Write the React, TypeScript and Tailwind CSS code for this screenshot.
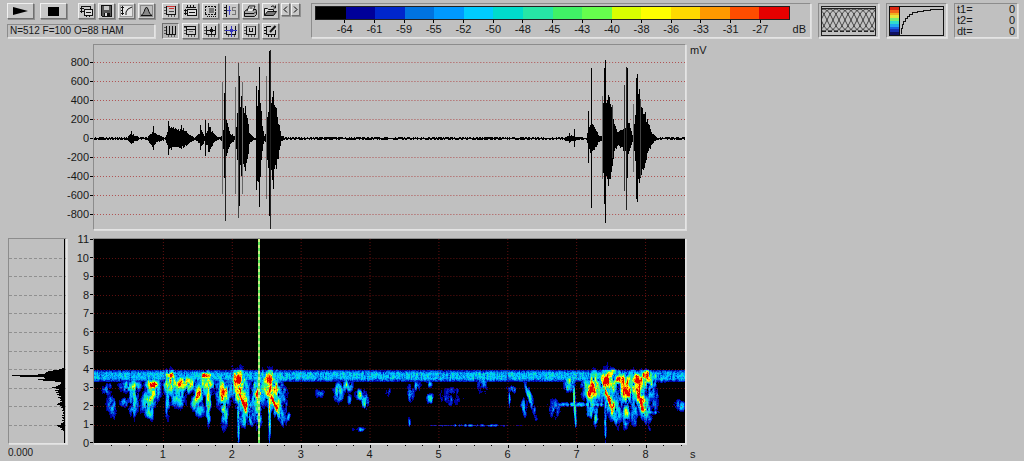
import React, { ReactNode } from 'react';

// Deterministic noise so every render draws the same recording
function createRandom(seed: number) {
    let s = seed;
    return () => {
        s = (s * 1664525 + 1013904223) % 4294967296;
        return s / 4294967296;
    };
}

const PALETTE = [
    '#000000', '#000099', '#0026cc', '#0073e0', '#0099ff', '#00ccff', '#00dccc', '#26e6a6',
    '#40f266', '#66ff4d', '#d9ff00', '#ffff00', '#ffd900', '#ff9900', '#ff4d00', '#e60000',
];

const LEVELS = [-64, -61, -59, -55, -52, -50, -48, -45, -43, -40, -38, -36, -33, -31, -27];

const PLOT_W = 592;
const SPEC_H = 204;
const SECOND = 69;

/* ---------- Waveform ---------- */

// [x, amplitude] envelope points, in plot pixels
const ENVELOPE: [number, number][] = [
    [0, 1], [33, 1], [37, 5], [41, 2], [47, 1], [53, 1], [58, 7], [63, 3], [71, 1], [75, 12], [82, 9], [90, 9], [96, 3],
    [101, 1], [108, 8], [110, 2], [115, 12], [119, 5], [123, 1], [128, 2], [130, 18], [133, 16], [136, 5], [141, 1], [143, 24],
    [147, 32], [151, 30], [153, 24], [155, 5], [159, 1], [161, 1], [162, 38], [166, 40], [168, 12], [170, 2],
    [172, 6], [174, 34], [178, 42], [181, 34], [184, 18], [187, 2], [192, 1], [470, 1], [478, 3], [484, 1], [493, 1],
    [496, 13], [501, 13], [505, 3], [508, 2], [510, 34], [513, 46], [517, 42], [521, 14], [524, 7], [530, 11],
    [535, 18], [539, 3], [541, 14], [544, 58], [548, 38], [553, 21], [558, 6], [563, 1], [592, 1],
];

// [x, up, down, stroke]
const SPIKES: [number, number, number, string][] = [
    [37, 7, 6, '#000'], [59, 12, 12, '#000'], [74, 17, 17, '#000'], [87, 13, 11, '#000'],
    [106, 13, 12, '#000'], [111, 18, 18, '#000'], [114, 15, 14, '#000'],
    [128, 56, 56, '#666'], [130, 45, 40, '#000'], [131, 82, 83, '#222'],
    [141, 51, 56, '#666'], [144, 75, 80, '#444'], [145, 62, 68, '#000'], [147, 42, 38, '#000'], [148, 56, 56, '#666'],
    [162, 52, 52, '#000'], [164, 48, 44, '#000'], [165, 71, 69, '#000'],
    [172, 62, 61, '#666'], [175, 87, 78, '#000'], [176, 88, 91, '#222'], [179, 47, 51, '#000'],
    [476, 5, 5, '#000'], [481, 9, 9, '#000'], [495, 27, 25, '#000'], [498, 70, 70, '#000'],
    [509, 42, 41, '#666'], [511, 70, 66, '#000'], [512, 78, 85, '#000'], [515, 43, 48, '#000'], [519, 33, 20, '#444'],
    [531, 53, 53, '#333'], [533, 71, 72, '#222'], [534, 70, 40, '#000'], [540, 34, 34, '#666'],
    [543, 60, 61, '#000'], [544, 64, 64, '#000'], [547, 39, 39, '#444'],
];

const WAVE_LABELS = [800, 600, 400, 200, 0, -200, -400, -600, -800];
const ZERO = 93;

function buildWave() {
    const rnd = createRandom(7);
    let d = '';
    let i = 0;
    for (let x = 0; x < PLOT_W; x++) {
        while (i < ENVELOPE.length - 2 && x > ENVELOPE[i + 1][0]) i++;
        const [x0, a0] = ENVELOPE[i];
        const [x1, a1] = ENVELOPE[i + 1];
        const amp = a0 + ((a1 - a0) * (x - x0)) / (x1 - x0);
        const quiet = amp < 1.5;
        const up = quiet ? (rnd() > 0.4 ? 1 : 0) : Math.round(amp * (0.75 + rnd() * 0.35));
        const down = quiet ? (rnd() > 0.4 ? 1 : 0) : Math.round(amp * (0.75 + rnd() * 0.35));
        d += `M${x} ${ZERO - up}h1v${up + down + 1}h-1z`;
    }
    return d;
}

const WAVE_PATH = buildWave();

const Waveform: React.FC = () => (
    <svg className="block h-full w-full" viewBox="0 0 592 184" preserveAspectRatio="none" shapeRendering="crispEdges">
        {WAVE_LABELS.filter(v => v !== 0).map(v => (
            <line key={v} x1="0" x2="592" y1={ZERO - Math.round(v * 0.095) + 0.5} y2={ZERO - Math.round(v * 0.095) + 0.5} stroke="#b05050" strokeDasharray="1 2" />
        ))}
        <path d={WAVE_PATH} fill="#000" />
        {SPIKES.map(([x, up, down, color]) => (
            <rect key={x} x={x} y={ZERO - up} width="1" height={up + down} fill={color} />
        ))}
    </svg>
);

/* ---------- Spectrogram ---------- */

// [x, y, rx, ry, level, slant]
type Blob = [number, number, number, number, number, number];

const BLOBS: Blob[] = [
    [13, 150, 5, 5, 0.3, 0], [17, 166, 4, 10, 0.3, 0.1], [36, 147, 8, 5, 0.5, 0], [39, 162, 4, 14, 0.38, 0], [31, 163, 5, 4, 0.28, 0],
    [58, 145, 5, 5, 0.82, 0], [57, 156, 6, 12, 0.58, -0.3], [55, 173, 4, 7, 0.36, 0],
    [76, 136, 4, 3, 1.1, 0], [76, 143, 5, 11, 0.64, 0], [89, 143, 10, 7, 0.76, 0], [84, 157, 6, 9, 0.46, 0], [73, 160, 2, 16, 0.36, 0],
    [112, 136, 4, 3, 1.1, 0], [113, 144, 6, 9, 0.6, 0], [104, 155, 4, 12, 0.6, -0.3], [114, 164, 2, 16, 0.6, 0], [105, 170, 5, 7, 0.3, 0],
    [129, 153, 3, 6, 1.1, 0], [129, 153, 5, 12, 0.7, 0], [130, 170, 3, 14, 0.5, 0],
    [144, 140, 4, 8, 1.2, 0], [145, 147, 7, 15, 0.72, 0.1], [148, 162, 2, 14, 1.1, 0.4], [149, 162, 6, 14, 0.68, 0.4], [144, 174, 1, 20, 0.62, 0], [149, 180, 4, 8, 0.34, 0],
    [164, 154, 3, 7, 1.1, 0], [164, 154, 5, 12, 0.7, 0], [164, 171, 3, 14, 0.48, 0],
    [175, 140, 4, 7, 1.2, 0], [176, 147, 8, 14, 0.72, 0.1], [179, 162, 2, 14, 1.1, 0.4], [180, 162, 6, 13, 0.68, 0.4], [175, 174, 1, 20, 0.62, 0],
    [189, 158, 5, 10, 0.26, 0], [194, 177, 2, 4, 0.26, 0],
    [244, 152, 4, 8, 0.4, 0], [253, 146, 4, 5, 0.42, 0], [255, 160, 2, 4, 0.3, 0], [266, 155, 4, 4, 0.48, 0], [271, 162, 3, 7, 0.42, 0],
    [265, 190, 6, 2, 0.24, 0], [316, 182, 1, 4, 0.36, 0], [317, 154, 3, 7, 0.32, 0], [337, 159, 3, 4, 0.38, 0], [358, 157, 10, 8, 0.22, 0],
    [324, 146, 3, 5, 0.28, 0], [336, 144, 3, 5, 0.26, 0], [294, 153, 3, 4, 0.24, 0], [389, 145, 5, 8, 0.26, 0], [225, 154, 6, 4, 0.2, 0],
    [418, 150, 4, 3, 0.36, 0], [416, 158, 1, 10, 0.3, 0], [434, 150, 2, 7, 0.45, 0.2], [438, 163, 2, 12, 0.42, 0.25], [431, 168, 3, 8, 0.28, 0],
    [476, 144, 4, 6, 0.64, 0], [481, 160, 1, 20, 0.6, 0.05], [461, 169, 5, 9, 0.24, 0],
    [498, 151, 4, 7, 1.15, 0], [499, 148, 7, 13, 0.68, 0], [497, 170, 3, 9, 0.42, 0], [502, 176, 2, 8, 0.42, 0],
    [512, 141, 4, 6, 1.15, 0], [514, 146, 7, 14, 0.68, 0], [516, 162, 2, 15, 1.1, 0.3], [517, 161, 6, 15, 0.65, 0.3], [512, 176, 1, 18, 0.52, 0],
    [526, 140, 11, 6, 0.76, 0], [518, 135, 4, 5, 0.85, 0],
    [533, 152, 4, 6, 1.1, 0], [532, 149, 6, 13, 0.68, 0], [533, 170, 3, 14, 0.5, 0],
    [544, 141, 5, 5, 1.15, 0], [544, 146, 8, 12, 0.68, 0], [547, 162, 2, 15, 1.1, 0.3], [548, 161, 5, 14, 0.65, 0.3], [541, 172, 3, 10, 0.4, 0],
    [553, 136, 4, 4, 1.02, 0], [554, 142, 6, 8, 0.58, 0], [563, 138, 8, 4, 0.5, 0], [558, 158, 6, 15, 0.26, 0],
    [492, 165, 26, 2, 0.34, 0], [374, 186, 34, 1, 0.25, 0], [587, 166, 5, 5, 0.3, 0], [556, 173, 8, 2, 0.34, 0], [400, 186, 20, 1, 0.24, 0],
];

function buildSpectrogram() {
    const rnd = createRandom(41);
    const top = 120;
    const rows = SPEC_H - top;
    const field = new Float32Array(PLOT_W * rows);

    for (const [bx, by, rx, ry, level, slant] of BLOBS) {
        const yMin = Math.max(top, by - ry * 2);
        const yMax = Math.min(SPEC_H - 1, by + ry * 2);
        for (let y = yMin; y <= yMax; y++) {
            const dy = (y - by) / ry;
            const cx = bx + (y - by) * slant;
            for (let x = Math.max(0, Math.floor(cx - rx * 2)); x <= Math.min(PLOT_W - 1, cx + rx * 2); x++) {
                const dx = (x - cx) / rx;
                const v = level * Math.exp(-(dx * dx + dy * dy) * 0.65);
                const k = (y - top) * PLOT_W + x;
                if (v > field[k]) field[k] = v;
            }
        }
    }

    // coarse noise, 2 columns by 5 rows a cell, blended between cells
    const cols = Math.ceil(PLOT_W / 2) + 2;
    const lattice = Array.from({ length: cols * 20 }, () => rnd());
    const coarse = (x: number, r: number) => {
        const gx = x / 2;
        const gy = r / 5;
        const ix = Math.floor(gx);
        const iy = Math.floor(gy);
        const fx = gx - ix;
        const fy = gy - iy;
        const a = lattice[iy * cols + ix] * (1 - fx) + lattice[iy * cols + ix + 1] * fx;
        const b = lattice[(iy + 1) * cols + ix] * (1 - fx) + lattice[(iy + 1) * cols + ix + 1] * fx;
        return a * (1 - fy) + b * fy;
    };

    const paths: string[] = PALETTE.map(() => '');
    let above = new Float32Array(PLOT_W).fill(0.5);
    for (let r = 0; r < rows; r++) {
        const y = r + top;
        const row = new Float32Array(PLOT_W);
        let runStart = 0;
        let runColor = 0;
        for (let x = 0; x < PLOT_W; x++) {
            row[x] = above[x] * 0.45 + rnd() * 0.55;
            const c = coarse(x, r);
            let v = field[r * PLOT_W + x];
            // weak energy breaks up into vertical streaks, strong cores stay solid
            if (v > 0.8) v *= 0.65 + row[x] * 0.3 + c * 0.35;
            else v = v * (row[x] * 0.7 + c * 1.45) - 0.05;
            if (y < 131) v *= 0.4;
            // steady tone just under 4 kHz
            if (y >= 131 && y <= 142) {
                const edge = Math.min(1, (Math.min(y - 130, 143 - y) + 1) / 5);
                v = Math.max(v, edge * (0.08 + row[x] * 0.32 + c * 0.14));
            }
            const color = v < 0.07 ? 0 : Math.min(15, Math.max(1, Math.floor(v * 16)));
            if (color !== runColor) {
                if (runColor > 0) paths[runColor] += `M${runStart} ${y}h${x - runStart}v1h${runStart - x}z`;
                runStart = x;
                runColor = color;
            }
        }
        if (runColor > 0) paths[runColor] += `M${runStart} ${y}h${PLOT_W - runStart}v1h${runStart - PLOT_W}z`;
        above = row;
    }
    return paths;
}

const SPEC_PATHS = buildSpectrogram();

const Spectrogram: React.FC = () => (
    <svg className="block h-full w-full bg-black" viewBox="0 0 592 204" preserveAspectRatio="none" shapeRendering="crispEdges">
        {SPEC_PATHS.map((d, i) => (
            <path key={i} d={d} fill={PALETTE[i]} />
        ))}
        <g stroke="#c02020" strokeOpacity="0.5" strokeDasharray="1 2">
            {Array.from({ length: 10 }, (_, i) => (
                <line key={i} x1="0" x2="592" y1={Math.round((i + 1) * 18.6) + 0.5} y2={Math.round((i + 1) * 18.6) + 0.5} />
            ))}
            {Array.from({ length: 8 }, (_, i) => (
                <line key={i} x1={(i + 1) * SECOND + 0.5} x2={(i + 1) * SECOND + 0.5} y1="0" y2="204" />
            ))}
        </g>
        <line x1="165" x2="165" y1="0" y2="204" stroke="#59e659" strokeWidth="2" />
        <line x1="165" x2="165" y1="0" y2="204" stroke="#c8ec80" strokeWidth="2" strokeDasharray="3 3" />
    </svg>
);

/* ---------- Power spectrum ---------- */

// bar lengths for each pixel row, starting just above 4 kHz
const SPECTRUM = [
    1, 3, 6, 12, 17, 19, 20, 27, 53, 45, 21, 20, 27, 22, 10, 4, 4, 5, 7, 9, 13, 9, 6, 10, 7, 9, 6, 8, 6, 4, 7, 5, 4, 5, 3, 5, 7, 8, 5,
    3, 4, 2, 2, 3, 1, 2, 2, 1, 3, 1, 3, 2, 1, 3, 1, 2, 4, 4, 8, 7, 5, 3, 4, 2, 1,
];

const PowerSpectrum: React.FC = () => (
    <svg className="block h-full w-full" viewBox="0 0 57 204" preserveAspectRatio="none" shapeRendering="crispEdges">
        {Array.from({ length: 10 }, (_, i) => (
            <line key={i} x1="0" x2="57" y1={Math.round((i + 1) * 18.6) + 0.5} y2={Math.round((i + 1) * 18.6) + 0.5} stroke="#909090" strokeDasharray="3 2" />
        ))}
        {SPECTRUM.map((w, i) => (
            <rect key={i} x={56 - w} y={128 + i} width={w} height="1" fill="#000" />
        ))}
        <rect x="55" y="0" width="1" height="204" fill="#000" />
    </svg>
);

/* ---------- Toolbar ---------- */

interface ToolProps {
    label: string;
    className?: string;
    pressed?: boolean;
    children: ReactNode;
}

const ToolButton: React.FC<ToolProps> = ({ label, className = 'h-4 w-[17px]', pressed, children }) => (
    <button
        type="button"
        aria-label={label}
        title={label}
        className={`${className} flex shrink-0 items-center justify-center border ${
            pressed
                ? 'border-t-[#707070] border-l-[#707070] border-r-[#e8e8e8] border-b-[#e8e8e8] bg-[#b4b4b4]'
                : 'border-t-[#f0f0f0] border-l-[#f0f0f0] border-r-[#707070] border-b-[#707070] bg-[#c8c8c8] shadow-[1px_1px_0_#909090]'
        }`}
    >
        {children}
    </button>
);

const Icon: React.FC<{ children: ReactNode }> = ({ children }) => (
    <svg className="h-3 w-[13px] shrink-0" viewBox="0 0 13 12" fill="none" stroke="#111" shapeRendering="crispEdges">
        {children}
    </svg>
);

// Small chart outline shared by most of the display icons
const Axes: React.FC = () => (
    <>
        <path d="M2.5 1v9M2 9.5h10M11.5 1v9" />
        <path d="M0 2.5h2M0 5.5h2M0 8.5h2M4.5 10v2M7.5 10v2M10.5 10v2" stroke="#555" />
    </>
);

const FILE_TOOLS: { label: string; icon: ReactNode }[] = [
    {
        label: 'Copy window',
        icon: <><path d="M1.5 8V1.5h9V4M1 3.5h3M1 6.5h3" /><path d="M4.5 4.5h8v6h-8zM6 7.5h5" fill="#ddd" /><path d="M0 3.5h1M0 6.5h1M6.5 11v1M9.5 11v1" /></>,
    },
    {
        label: 'Save',
        icon: <><path d="M1.5.5h10v11h-9l-1-1z" fill="#555" /><path d="M4 1h5v4H4z" fill="#c8c8c8" stroke="none" /><path d="M4 8h6v3H4z" fill="#111" stroke="none" /><path d="M5 8h2v3H5z" fill="#ddd" stroke="none" /></>,
    },
    {
        label: 'Transfer curve',
        icon: <><path d="M.5.5h12v11H.5z" fill="#e4e4e4" stroke="#999" /><path d="M2.5 1v9M1 2.5h3M1 5.5h2M1 8.5h3" /><path d="M6 10V7l2-3 4-2" shapeRendering="auto" /></>,
    },
    {
        label: 'Window function',
        icon: <><path d="M.5.5h12v11H.5z" fill="#bdbdbd" stroke="#888" /><path d="M1 10.5c2-1 3-3 4-6.5L6.5 2 8 4c1 3.5 2 5.5 4 6.5z" fill="#888" shapeRendering="auto" /></>,
    },
];

const VIEW_TOOLS: { label: string; icon: ReactNode }[] = [
    { label: 'Title', icon: <><Axes /><path d="M3 1.5h8" stroke="#c33" /><path d="M5 3.5h5" stroke="#c33" /><path d="M5 6.5h5" stroke="#444" /></> },
    { label: 'Stack windows', icon: <><path d="M2 2.5h10M3.5 0v3M6.5 0v3M9.5 0v3M1.5 4v6M0 5.5h3M0 8.5h3" /><path d="M3.5 4.5h9v6h-9zM5 7.5h6" fill="#ddd" /></> },
    { label: 'Select region', icon: <><path d="M1 1.5h11M1.5 1v9M1 9.5h11M11.5 1v9" strokeDasharray="2 1" /><path d="M5 3h5v5H5z" fill="#777" stroke="none" /><path d="M3 11.5h10" strokeDasharray="1 1" /></> },
    { label: 'Scale', icon: <><path d="M2.5 0v12M0 2.5h2M0 5.5h2M0 8.5h2" /><path d="M3 5.5h4M5.5 1v9" stroke="#4444cc" /><path d="M12 2.5H8.5v3h3v4H8" stroke="#777" /></> },
    { label: 'Print', icon: <g shapeRendering="auto"><path d="M.5 6.5L3 4.5h9l.5 2v3l-2 2H.5z" fill="#aaa" /><path d="M3 6l2-5h6L9 6" fill="#eee" /><path d="M1 8.5h9l2-2M5.5 3h3" /></g> },
    { label: 'Open', icon: <g shapeRendering="auto"><path d="M.5 10.5v-7h3l1 1h5v2" fill="#ddd" /><path d="M.5 10.5l3-4h9l-3 4z" fill="#777" /><path d="M7 2c1-1.5 3-1.5 4 .5M11.5.5V3h-2" /></g> },
];

const MARK_TOOLS: { label: string; pressed?: boolean; icon: ReactNode }[] = [
    { label: 'Time cursors', pressed: true, icon: <><Axes /><path d="M5.5 1v9M8.5 1v9" /></> },
    { label: 'Frequency cursors', icon: <><Axes /><path d="M0 1.5h12M3 4.5h9" /><path d="M5 6.5h4" stroke="#777" /></> },
    { label: 'Crosshair', icon: <><Axes /><path d="M3 5.5h8M7 2v7" /><path d="M6 4.5h2v2H6z" /></> },
    { label: 'Harmonic cursor', icon: <><Axes /><path d="M1 5.5h12M7 1v11" stroke="#3333bb" /><path d="M6 4.5h2v2H6z" stroke="#3333bb" /></> },
    { label: 'Marker', icon: <><Axes /><path d="M5.5 3v3.5h3V3" /><path d="M3 1.5h8" stroke="#666" /></> },
    { label: 'Annotate', icon: <><path d="M2.5 1v9M2 9.5h10M11.5 5v5M0 2.5h2M0 5.5h2M0 8.5h2M4.5 10v2M7.5 10v2M10.5 10v2M2 1.5h5" /><path d="M6 7l5.5-6" strokeWidth="2" shapeRendering="auto" /></> },
];

const PANEL = 'border border-t-[#8c8c8c] border-l-[#8c8c8c] border-r-[#e4e4e4] border-b-[#e4e4e4] shadow-[1px_1px_0_#dcdcdc]';

const ColorScale: React.FC = () => (
    <div className={`${PANEL} ml-[11px] h-[35px] min-w-0 flex-1 pt-[2px] pr-5 pl-[3px]`}>
        <div className="flex h-[14px] border border-[#202020]">
            {PALETTE.map(color => (
                <div key={color} className="flex-1" style={{ backgroundColor: color }} />
            ))}
        </div>
        <div className="relative grid grid-cols-[repeat(32,minmax(0,1fr))] leading-3">
            {LEVELS.map((level, i) => (
                <div key={level} className={`col-span-2 flex flex-col items-center ${i === 0 ? 'col-start-2' : ''}`}>
                    <span className="h-[3px] w-px bg-black" />
                    <span>{level}</span>
                </div>
            ))}
            <span className="absolute top-[3px] -right-4">dB</span>
        </div>
    </div>
);

const WindowPreview: React.FC = () => (
    <svg className="block h-[30px] w-[55px]" viewBox="0 0 55 30" fill="none" stroke="#222">
        {Array.from({ length: 12 }, (_, i) => {
            const x = i * 6 - 15;
            return (
                <g key={i} strokeWidth="0.8">
                    <path d={`M${x} 25C${x + 8} 24 ${x + 10} 4 ${x + 18} 3`} />
                    <path d={`M${x} 3C${x + 8} 4 ${x + 10} 24 ${x + 18} 25`} />
                </g>
            );
        })}
        <g shapeRendering="crispEdges">
            <path d="M.5.5h54v29H.5zM0 2.5h55" />
            <path d="M1 25.5h53" strokeDasharray="4 2" />
        </g>
    </svg>
);

const CurvePreview: React.FC = () => (
    <svg className="block h-[30px] w-[55px]" viewBox="0 0 55 30" fill="none" stroke="#111" shapeRendering="crispEdges">
        {['#d92610', '#f26618', '#f2b020', '#e6e639', '#7aec70', '#30dccc', '#20a8f0', '#1a60e0', '#1830b0', '#101060'].map((color, i) => (
            <rect key={color} x="1" y={1 + i * 2.8} width="9" height="3" fill={color} stroke="none" />
        ))}
        <path d="M.5.5h54v29H.5zM10.5 0v30" />
        <path d="M12.5 28v-6h1v-4h1v-3h2v-3h2v-2h2V8h3V6h5V5h6V4h7V3h13" />
    </svg>
);

const Toolbar: React.FC = () => (
    <header className="flex items-start pt-[3px] pr-[6px] pl-[7px]">
        <div className="flex w-[148px] shrink-0 flex-col gap-[5px]">
            <div className="flex">
                <ToolButton label="Play" className="h-4 w-[27px]">
                    <svg className="h-2 w-[15px]" viewBox="0 0 15 8"><path d="M0 0l15 4L0 8z" /></svg>
                </ToolButton>
                <ToolButton label="Stop" className="ml-[6px] h-4 w-[27px]">
                    <span className="h-[9px] w-[11px] bg-black" />
                </ToolButton>
                <div className="ml-[11px] flex gap-[3px]">
                    {FILE_TOOLS.map(({ label, icon }) => (
                        <ToolButton key={label} label={label}><Icon>{icon}</Icon></ToolButton>
                    ))}
                </div>
            </div>
            <div className={`${PANEL} h-[14px] pl-[2px] text-[10px] leading-3 whitespace-nowrap`}>N=512 F=100 O=88 HAM</div>
        </div>
        <div className="ml-[7px] flex shrink-0 flex-col gap-1">
            <div className="flex gap-[3px]">
                {VIEW_TOOLS.map(({ label, icon }) => (
                    <ToolButton key={label} label={label}><Icon>{icon}</Icon></ToolButton>
                ))}
            </div>
            <div className="flex gap-[3px]">
                {MARK_TOOLS.map(({ label, icon, pressed }) => (
                    <ToolButton key={label} label={label} pressed={pressed}><Icon>{icon}</Icon></ToolButton>
                ))}
            </div>
        </div>
        <div className="ml-[2px] flex shrink-0 gap-px">
            <ToolButton label="Previous" className="h-[13px] w-[9px]">
                <svg className="h-[7px] w-[5px] shrink-0" viewBox="0 0 5 7" fill="none" stroke="#000"><path d="M4 .5l-3 3 3 3" /></svg>
            </ToolButton>
            <ToolButton label="Next" className="h-[13px] w-[9px]">
                <svg className="h-[7px] w-[5px] shrink-0" viewBox="0 0 5 7" fill="none" stroke="#000"><path d="M1 .5l3 3-3 3" /></svg>
            </ToolButton>
        </div>
        <ColorScale />
        <div className={`${PANEL} ml-[7px] h-[35px] shrink-0 p-[2px]`}><WindowPreview /></div>
        <div className={`${PANEL} ml-[7px] h-[35px] shrink-0 p-[2px]`}><CurvePreview /></div>
        <dl className={`${PANEL} ml-[7px] grid h-[35px] w-[64px] shrink-0 grid-cols-2 px-[2px] leading-[11px]`}>
            {['t1=', 't2=', 'dt='].map(name => (
                <React.Fragment key={name}>
                    <dt>{name}</dt>
                    <dd className="text-right">0</dd>
                </React.Fragment>
            ))}
        </dl>
    </header>
);

const AxisLabels: React.FC<{ values: number[]; className: string }> = ({ values, className }) => (
    <div className={`flex flex-col justify-between leading-3 ${className}`}>
        {values.map(v => (
            <div key={v} className="flex items-center justify-end gap-px">
                <span>{v}</span>
                <span className="h-px w-[3px] bg-black" />
            </div>
        ))}
    </div>
);

const TimeTicks: React.FC = () => (
    <svg className="block h-1 w-full" viewBox="0 0 592 4" preserveAspectRatio="none" shapeRendering="crispEdges">
        {Array.from({ length: 34 }, (_, i) => (
            <rect key={i} x={Math.round(((i + 1) * SECOND) / 4)} y="1" width="1" height={i % 4 === 3 ? 3 : 1} fill="#000" />
        ))}
    </svg>
);

export default function App() {
    return (
        <div className="min-h-screen bg-[#c0c0c0] font-['Liberation_Sans',Arial,sans-serif] text-[11px] text-[#181818]">
            <Toolbar />
            <main className="mt-[5px] grid grid-cols-[59px_26px_minmax(0,593px)_auto] pl-2">
                <AxisLabels className="col-start-2 pt-3 pb-[10px]" values={WAVE_LABELS} />
                <section aria-label="Waveform" className={`${PANEL} h-[186px]`}>
                    <Waveform />
                </section>
                <span className="pl-1 leading-3">mV</span>

                <section aria-label="Power spectrum" className={`${PANEL} mt-2 h-[206px]`}>
                    <PowerSpectrum />
                </section>
                <AxisLabels className="mt-[3px] -mb-[5px]" values={[11, 10, 9, 8, 7, 6, 5, 4, 3, 2, 1, 0]} />
                <section aria-label="Spectrogram" className={`${PANEL} mt-2 h-[206px]`}>
                    <Spectrogram />
                </section>

                <span className="col-start-1 pt-[3px] text-[10px] leading-3">0.000</span>
                <div className="col-start-3 pl-px">
                    <TimeTicks />
                    <div className="flex leading-3">
                        <span className="w-[5.8%] shrink-0" />
                        {[1, 2, 3, 4, 5, 6, 7, 8].map(s => (
                            <span key={s} className="w-[11.65%] shrink-0 text-center">{s}</span>
                        ))}
                    </div>
                </div>
                <span className="pt-1 pl-1 leading-3">s</span>
            </main>
        </div>
    );
}
